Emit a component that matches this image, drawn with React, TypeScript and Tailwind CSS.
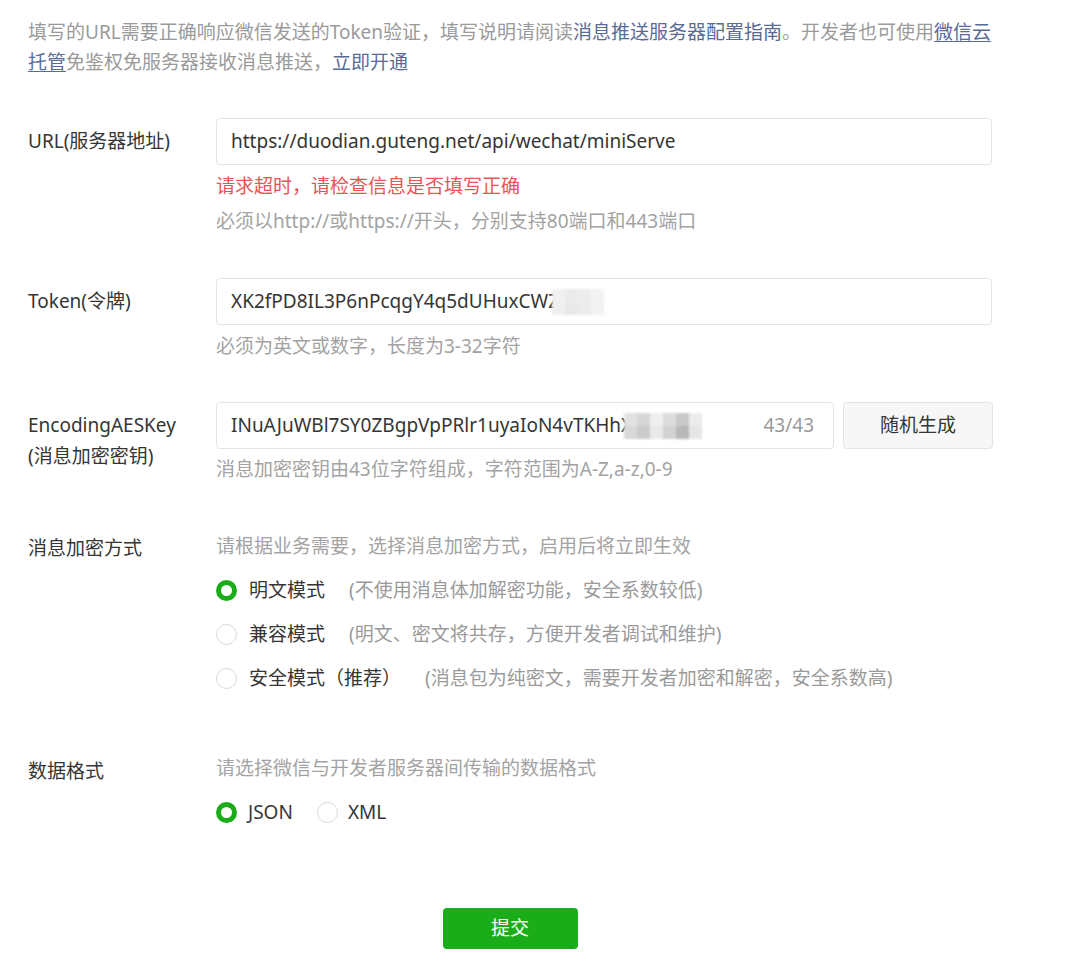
import { ReactNode } from "react";

const Radio = ({ checked }: { checked?: boolean }) =>
  checked ? (
    <span className="box-border inline-block h-[21px] w-[21px] shrink-0 rounded-full border-[5px] border-[#1aad19] bg-white" />
  ) : (
    <span className="box-border inline-block h-[21px] w-[21px] shrink-0 rounded-full border border-[#d9d9d9] bg-white" />
  );

const Row = ({ label, children, labelClass = "" }: { label: ReactNode; children: ReactNode; labelClass?: string }) => (
  <div className="flex">
    <div className={`w-[188px] shrink-0 text-[#353535] ${labelClass}`}>{label}</div>
    <div className="flex-1">{children}</div>
  </div>
);

const Mosaic = ({ cells }: { cells: string[][] }) => (
  <span className="inline-flex flex-col blur-[1px]">
    {cells.map((row, i) => (
      <span key={i} className="flex">
        {row.map((c, j) => (
          <span key={j} className="h-[13px] w-[13px]" style={{ background: c }} />
        ))}
      </span>
    ))}
  </span>
);

const App = () => {
  return (
    <div
      className="min-h-[972px] w-full bg-white text-[19px]"
      style={{ fontFamily: '"Noto Sans", "Noto Sans CJK SC", sans-serif' }}
    >
      <div className="ml-[28px] w-[964px] pt-[17px]">
        <p className="leading-[30px] text-[#9a9a9a]">
          填写的URL需要正确响应微信发送的Token验证，填写说明请阅读
          <span className="text-[#576b95]">消息推送服务器配置指南</span>。开发者也可使用
          <span className="text-[#576b95] underline underline-offset-2">
            微信云
            <br />
            托管
          </span>
          免鉴权免服务器接收消息推送，<span className="text-[#576b95]">立即开通</span>
        </p>

        <div className="mt-[41px]">
          <Row label="URL(服务器地址)" labelClass="leading-[47px]">
            <div className="flex h-[47px] items-center rounded border border-[#e4e4e4] px-[14px] text-[#353535]">
              https://duodian.guteng.net/api/wechat/miniServe
            </div>
            <div className="mt-[6px] leading-[30px] text-[#e85454]">请求超时，请检查信息是否填写正确</div>
            <div className="mt-[5px] leading-[30px] text-[#a3a3a3]">必须以http://或https://开头，分别支持80端口和443端口</div>
          </Row>
        </div>

        <div className="mt-[42px]">
          <Row label="Token(令牌)" labelClass="leading-[47px]">
            <div className="flex h-[47px] items-center rounded border border-[#e4e4e4] px-[14px] text-[#353535]">
              <span>XK2fPD8IL3P6nPcqgY4q5dUHuxCWZ</span>
              <span className="-ml-[7px] inline-flex">
                <Mosaic
                  cells={[
                    ["#f0f0f0", "#ebebeb", "#ededed", "#f3f3f3"],
                    ["#efefef", "#e9e9e9", "#ececec", "#f2f2f2"],
                  ]}
                />
              </span>
            </div>
            <div className="mt-[6px] leading-[30px] text-[#a3a3a3]">必须为英文或数字，长度为3-32字符</div>
          </Row>
        </div>

        <div className="mt-[41px]">
          <Row
            label={
              <>
                EncodingAESKey
                <br />
                (消息加密密钥)
              </>
            }
            labelClass="pt-[8px] leading-[31px]"
          >
            <div className="flex gap-[9px]">
              <div className="flex h-[47px] w-[618px] items-center rounded border border-[#e4e4e4] pl-[14px] pr-[19px] text-[#353535]">
                <span>INuAJuWBl7SY0ZBgpVpPRlr1uyaIoN4vTKHhX</span>
                <span className="-ml-[8px] inline-flex">
                  <Mosaic
                    cells={[
                      ["#e2e2e2", "#d6d6d6", "#efefef", "#dcdcdc", "#c9c9c9", "#ececec"],
                      ["#d8d8d8", "#cbcbcb", "#e9e9e9", "#d2d2d2", "#b8b8b8", "#e6e6e6"],
                    ]}
                  />
                </span>
                <span className="ml-auto text-[#9a9a9a]">43/43</span>
              </div>
              <button className="h-[47px] w-[150px] rounded border border-[#e4e4e4] bg-[#f7f7f7] text-[#353535]">
                随机生成
              </button>
            </div>
            <div className="mt-[5px] leading-[30px] text-[#a3a3a3]">消息加密密钥由43位字符组成，字符范围为A-Z,a-z,0-9</div>
          </Row>
        </div>

        <div className="mt-[47px]">
          <Row label="消息加密方式" labelClass="pt-[2px] leading-[30px]">
            <div className="leading-[30px] text-[#a3a3a3]">请根据业务需要，选择消息加密方式，启用后将立即生效</div>
            <div className="mt-[14px] flex flex-col gap-[14px]">
              <label className="flex h-[30px] items-center">
                <Radio checked />
                <span className="ml-[12px] text-[#353535]">明文模式</span>
                <span className="ml-[24px] text-[#9a9a9a]">(不使用消息体加解密功能，安全系数较低)</span>
              </label>
              <label className="flex h-[30px] items-center">
                <Radio />
                <span className="ml-[12px] text-[#353535]">兼容模式</span>
                <span className="ml-[24px] text-[#9a9a9a]">(明文、密文将共存，方便开发者调试和维护)</span>
              </label>
              <label className="flex h-[30px] items-center">
                <Radio />
                <span className="ml-[12px] text-[#353535]">安全模式（推荐）</span>
                <span className="ml-[24px] text-[#9a9a9a]">(消息包为纯密文，需要开发者加密和解密，安全系数高)</span>
              </label>
            </div>
          </Row>
        </div>

        <div className="mt-[60px]">
          <Row label="数据格式" labelClass="pt-[3px] leading-[30px]">
            <div className="leading-[30px] text-[#a3a3a3]">请选择微信与开发者服务器间传输的数据格式</div>
            <div className="mt-[14px] flex h-[30px] items-center">
              <Radio checked />
              <span className="ml-[11px] text-[#353535]">JSON</span>
              <span className="ml-[24px] inline-flex">
                <Radio />
              </span>
              <span className="ml-[10px] text-[#353535]">XML</span>
            </div>
          </Row>
        </div>

        <div className="mt-[81px] flex justify-center">
          <button className="h-[41px] w-[135px] rounded bg-[#1aad19] text-white">提交</button>
        </div>
      </div>
    </div>
  );
};

export default App;
